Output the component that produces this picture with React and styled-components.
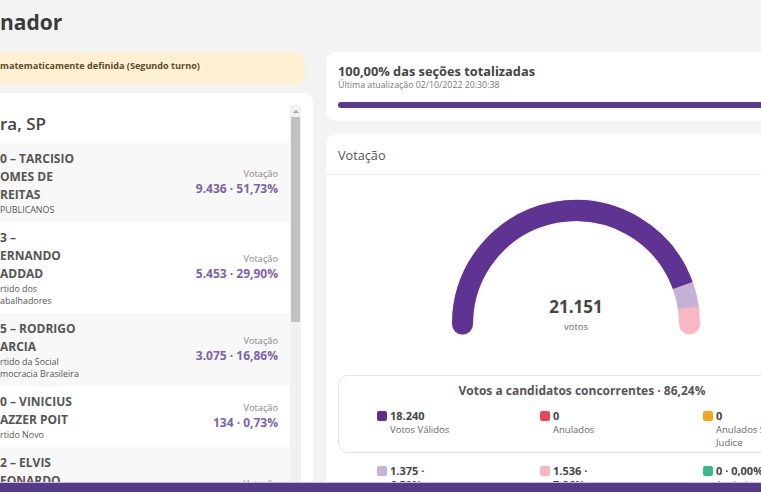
import React from 'react';
import styled, { createGlobalStyle } from 'styled-components';

const GlobalStyle = createGlobalStyle`
  html, body {
    margin: 0;
    padding: 0;
    background: #f3f3f3;
  }
  body {
    font-family: 'Open Sans', 'Noto Sans', sans-serif;
    color: #444;
  }
`;

const Viewport = styled.div`
  width: 100vw;
  height: 100vh;
  overflow: hidden;
  background: #f3f3f3;
`;

const Page = styled.div`
  display: grid;
  grid-template-columns: 333px 512px;
  grid-template-rows: 52px auto;
  column-gap: 13px;
  margin-left: -20px;
`;

const Title = styled.h1`
  grid-column: 1 / -1;
  margin: 0;
  padding-left: 20px;
  font-size: 21px;
  line-height: 44px;
  font-weight: 700;
  color: #3b3b3b;
`;

const Column = styled.div`
  display: flex;
  flex-direction: column;
  gap: ${p => p.$gap}px;
  min-width: 0;
`;

const Alert = styled.div`
  margin-right: 8px;
  padding: 7px 12px 12px 20px;
  background: #fdf0d3;
  border-radius: 10px;
  font-size: 9.1px;
  line-height: 14px;
  font-weight: 700;
  color: #5d4a28;
`;

const Card = styled.div`
  background: #fff;
  border-radius: 10px;
`;

const ListCard = styled(Card)`
  display: flex;
  height: 420px;
  padding: 12px 12px 0 0;
`;

const List = styled.div`
  flex: 1;
  min-width: 0;
`;

const Heading = styled.h2`
  margin: 0;
  padding: 8px 0 8px 20px;
  font-size: 17px;
  line-height: 22px;
  font-weight: 600;
  color: #444;
`;

const Row = styled.div`
  display: flex;
  justify-content: space-between;
  align-items: center;
  padding: 7px 12px 6px 20px;
  background: ${p => (p.$shade ? '#f8f8f8' : '#fff')};
`;

const Candidate = styled.div`
  white-space: nowrap;
`;

const NameLine = styled.div`
  font-size: 12px;
  line-height: 18px;
  font-weight: 700;
  color: #555;
`;

const PartyLine = styled.div`
  font-size: 8.9px;
  line-height: 12px;
  color: #555;
`;

const Result = styled.div`
  text-align: right;
`;

const ResultLabel = styled.div`
  font-size: 9.2px;
  line-height: 12px;
  color: #888;
`;

const ResultValue = styled.div`
  font-size: 12px;
  line-height: 18px;
  font-weight: 700;
  color: #7f62ab;
`;

const ScrollTrack = styled.div`
  width: 11px;
  flex-shrink: 0;
  background: #f1f1f1;
`;

const ScrollArrow = styled.div`
  height: 12px;
  display: flex;
  align-items: center;
  justify-content: center;

  &::before {
    content: '';
    border-left: 3px solid transparent;
    border-right: 3px solid transparent;
    border-bottom: 3px solid #a3a3a3;
  }
`;

const ScrollThumb = styled.div`
  margin: 0 1px;
  height: 205px;
  background: #c1c1c1;
`;

const StatusCard = styled(Card)`
  padding: 11px 12px 13px;
`;

const StatusTitle = styled.div`
  font-size: 12.8px;
  line-height: 17px;
  font-weight: 700;
  color: #444;
`;

const StatusSub = styled.div`
  font-size: 8.8px;
  line-height: 11px;
  color: #777;
`;

const Progress = styled.div`
  margin-top: 11px;
  height: 6px;
  border-radius: 3px;
  background: #5a3a8e;
`;

const VotesCard = styled(Card)`
  height: 420px;
`;

const VotesHeader = styled.div`
  padding: 11px 12px 9px;
  font-size: 12.7px;
  line-height: 20px;
  color: #555;
  border-bottom: 1px solid #eee;
`;

const VotesBody = styled.div`
  padding: 15px 12px 0;
`;

const GaugeWrap = styled.div`
  position: relative;
  width: 272px;
  height: 150px;
  margin: 0 auto;
`;

const GaugeLabel = styled.div`
  position: absolute;
  left: 0;
  width: 260px;
  top: 105px;
  text-align: center;
`;

const GaugeTotal = styled.div`
  font-size: 17px;
  line-height: 24px;
  font-weight: 700;
  color: #444;
`;

const GaugeUnit = styled.div`
  margin-top: 2px;
  font-size: 9.5px;
  line-height: 12px;
  color: #666;
`;

const Breakdown = styled.div`
  margin-top: 35px;
  padding: 7px 0 3px;
  border: 1px solid #e3e3e3;
  border-radius: 10px;
`;

const BreakdownTitle = styled.div`
  text-align: center;
  font-size: 12px;
  line-height: 16px;
  font-weight: 700;
  color: #555;
`;

const Legend = styled.div`
  display: grid;
  grid-template-columns: repeat(3, 163px);
  padding-left: ${p => p.$indent}px;
  margin-top: ${p => p.$top}px;
`;

const Item = styled.div`
  display: flex;
  gap: 3px;
`;

const Swatch = styled.span`
  width: 10px;
  height: 10px;
  margin-top: 2px;
  border-radius: 2px;
  flex-shrink: 0;
  background: ${p => p.$color};
`;

const ItemText = styled.div`
  max-width: 65px;
`;

const ItemValue = styled.div`
  font-size: 11px;
  line-height: 14px;
  font-weight: 700;
  color: #444;
`;

const ItemLabel = styled.div`
  font-size: 9.5px;
  line-height: 13px;
  color: #666;
`;

const BottomBar = styled.div`
  position: fixed;
  left: 0;
  right: 0;
  bottom: 0;
  height: 9px;
  background: #553b87;
  border-top: 1px solid #cbb9e3;
`;

const candidates = [
  { name: ['0 – TARCISIO', 'OMES DE', 'REITAS'], party: ['PUBLICANOS'], value: '9.436 · 51,73%' },
  { name: ['3 –', 'ERNANDO', 'ADDAD'], party: ['rtido dos', 'abalhadores'], value: '5.453 · 29,90%' },
  { name: ['5 – RODRIGO', 'ARCIA'], party: ['rtido da Social', 'mocracia Brasileira'], value: '3.075 · 16,86%' },
  { name: ['0 – VINICIUS', 'AZZER POIT'], party: ['rtido Novo'], value: '134 · 0,73%' },
  { name: ['2 – ELVIS', 'EONARDO', 'EZAR'], party: ['rtido Democrático', 'abalhista'], value: '142 · 0,78%' },
];

const topLegend = [
  { color: '#5b2f8f', value: '18.240', label: 'Votos Válidos' },
  { color: '#e8485c', value: '0', label: 'Anulados' },
  { color: '#f5a51c', value: '0', label: 'Anulados Sub Judice' },
];

const bottomLegend = [
  { color: '#c6b1d8', value: '1.375 · 6,50%', label: 'Brancos' },
  { color: '#f7b6c0', value: '1.536 · 7,26%', label: 'Nulos' },
  { color: '#36b98e', value: '0 · 0,00%', label: 'Anulados em separado' },
];

// semicircle gauge, centre (130,134), r 113.5
const CX = 130;
const CY = 134;
const R = 113.5;
const point = deg => {
  const a = (deg * Math.PI) / 180;
  return `${(CX + R * Math.cos(a)).toFixed(2)} ${(CY - R * Math.sin(a)).toFixed(2)}`;
};
const arc = endDeg => `M${point(180)} A${R} ${R} 0 0 1 ${point(endDeg)}`;

const Gauge = () => (
  <svg width="272" height="150" viewBox="0 0 272 150">
    <path d={arc(0)} fill="none" stroke="#f8b8c3" strokeWidth="21" strokeLinecap="round" />
    <path d={arc(8.3)} fill="none" stroke="#c5b0d6" strokeWidth="21" />
    <path d={arc(19.8)} fill="none" stroke="#5f3392" strokeWidth="21" />
    <circle cx={CX - R} cy={CY} r="10.5" fill="#5f3392" />
  </svg>
);

const LegendRow = ({ items, indent, top }) => (
  <Legend $indent={indent} $top={top}>
    {items.map(item => (
      <Item key={item.label}>
        <Swatch $color={item.color} />
        <ItemText>
          <ItemValue>{item.value}</ItemValue>
          <ItemLabel>{item.label}</ItemLabel>
        </ItemText>
      </Item>
    ))}
  </Legend>
);

const App = () => (
  <Viewport>
    <GlobalStyle />
    <Page>
      <Title>nador</Title>

      <Column $gap={8}>
        <Alert>matematicamente definida (Segundo turno)</Alert>
        <ListCard>
          <List>
            <Heading>ra, SP</Heading>
            {candidates.map((c, i) => (
              <Row key={c.value} $shade={i % 2 === 0}>
                <Candidate>
                  {c.name.map(line => <NameLine key={line}>{line}</NameLine>)}
                  {c.party.map(line => <PartyLine key={line}>{line}</PartyLine>)}
                </Candidate>
                <Result>
                  <ResultLabel>Votação</ResultLabel>
                  <ResultValue>{c.value}</ResultValue>
                </Result>
              </Row>
            ))}
          </List>
          <ScrollTrack>
            <ScrollArrow />
            <ScrollThumb />
          </ScrollTrack>
        </ListCard>
      </Column>

      <Column $gap={13}>
        <StatusCard>
          <StatusTitle>100,00% das seções totalizadas</StatusTitle>
          <StatusSub>Última atualização 02/10/2022 20:30:38</StatusSub>
          <Progress />
        </StatusCard>

        <VotesCard>
          <VotesHeader>Votação</VotesHeader>
          <VotesBody>
            <GaugeWrap>
              <Gauge />
              <GaugeLabel>
                <GaugeTotal>21.151</GaugeTotal>
                <GaugeUnit>votos</GaugeUnit>
              </GaugeLabel>
            </GaugeWrap>
            <Breakdown>
              <BreakdownTitle>Votos a candidatos concorrentes · 86,24%</BreakdownTitle>
              <LegendRow items={topLegend} indent={38} top={10} />
            </Breakdown>
            <LegendRow items={bottomLegend} indent={39} top={11} />
          </VotesBody>
        </VotesCard>
      </Column>
    </Page>
    <BottomBar />
  </Viewport>
);

export default App;
